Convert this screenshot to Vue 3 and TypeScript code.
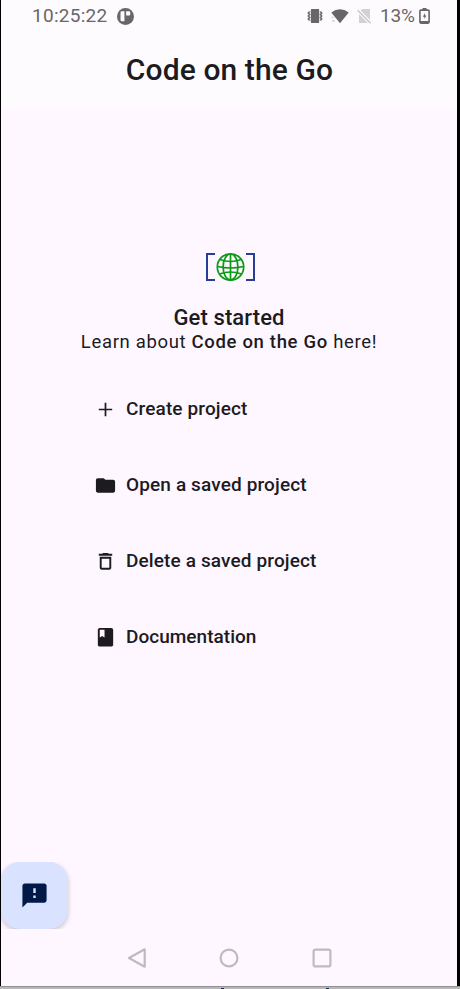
<script setup lang="ts">
type ActionIcon = 'add' | 'folder' | 'delete' | 'book'

interface Action {
  icon: ActionIcon
  label: string
}

const actions: Action[] = [
  { icon: 'add', label: 'Create project' },
  { icon: 'folder', label: 'Open a saved project' },
  { icon: 'delete', label: 'Delete a saved project' },
  { icon: 'book', label: 'Documentation' },
]

const iconPaths: Record<ActionIcon, string> = {
  add: 'M19 12.9h-6.1V19h-1.8v-6.1H5v-1.8h6.1V5h1.8v6.1H19z',
  folder: 'M10 4.500H4c-1.100 0-2 .9-2 2v11c0 1.100.9 2 2 2h16c1.100 0 2-.9 2-2V8c0-1.100-.9-2-2-2h-8z',
  delete: 'M6 18.500c0 1.100.9 2 2 2h8c1.100 0 2-.9 2-2V7H6zM8 9h8v9.500H8zM15.500 4l-1-1h-5l-1 1H5v2h14V4z',
  book: 'M18 2H6c-1.100 0-2 .9-2 2v15.500c0 1.100.9 2 2 2h12c1.100 0 2-.9 2-2V4c0-1.100-.9-2-2-2zM6 4h5v8l-2.500-1.500L6 12z',
}
</script>

<template>
  <div class="device">
    <div class="screen">
      <header class="top">
        <div class="status">
          <span class="clock">10:25:22</span>
          <svg class="badge" viewBox="0 0 16 16" width="17" height="17">
            <circle cx="8" cy="8" r="8" fill="#68666a" />
            <path d="M3.300 4.200Q3.300 3 4.500 3H7v9.500H4.500Q3.300 12.500 3.300 11.300zM8.600 3h2.700q1.200 0 1.200 1.200v1.600q0 1.200-1.200 1.200H8.600z" fill="#fefbff" />
          </svg>
          <span class="grow"></span>
          <svg class="vibrate" viewBox="0 0 16 16" width="16" height="16">
            <rect x="3.800" y="1" width="8.400" height="14" rx="1" fill="#68666a" />
            <path d="M2.600 3.500 1.300 5l1.300 1.500L1.300 8l1.300 1.500L1.300 11l1.300 1.500M13.400 3.500 14.700 5l-1.300 1.500L14.700 8l-1.300 1.500 1.300 1.500-1.300 1.500" fill="none" stroke="#68666a" stroke-width="1.500" />
          </svg>
          <svg class="wifi" viewBox="0 0 18 16" width="18" height="16">
            <path d="M.3 4.600Q9-2.200 17.700 4.600L9 15.200z" fill="#68666a" />
            <path d="M.5 9.500h2M1 13h3" stroke="#d5d2d7" stroke-width="1.300" />
          </svg>
          <svg class="signal" viewBox="0 0 15 16" width="15" height="16">
            <path d="M5 1h8v11L3.800 2.800zM2 15V6l9 9z" fill="#d4d1d5" />
            <path d="M.6 2.200l13 13" stroke="#c8c5c9" stroke-width="1.400" />
          </svg>
          <span class="percent">13%</span>
          <svg class="battery" viewBox="0 0 11 16" width="11" height="16">
            <path d="M3.500 0h4v2h-4z" fill="#68666a" />
            <rect x=".9" y="2.100" width="9.200" height="13" rx="1" fill="none" stroke="#68666a" stroke-width="1.600" />
            <path d="M6 5 3.800 8.700h1.500v2.400l2.200-3.500H6zM1 13h9v2H1z" fill="#68666a" />
          </svg>
        </div>
        <h1 class="title"><span>Code on the Go</span></h1>
      </header>

      <main class="content">
        <svg class="logo" viewBox="0 0 50 30" width="50" height="30">
          <path d="M10 2H2v26h8M41 2h8v26h-8" fill="none" stroke="#263e97" stroke-width="2" />
          <g fill="none" stroke="#0a9b13" stroke-width="1.700">
            <circle cx="25.500" cy="15" r="13.200" />
            <path d="M25.500 2v26" />
            <ellipse cx="25.500" cy="15" rx="7.400" ry="13" />
            <path d="M15 7.500q10.500 4 21 0M12.500 14.500q13 3 26 0M14.500 22q11-4 22 0" />
          </g>
        </svg>
        <h2 class="heading"><span>Get started</span></h2>
        <p class="intro"><span>Learn about <b>Code on the Go</b> here!</span></p>
        <nav class="actions">
          <button v-for="action in actions" :key="action.icon" class="action" type="button">
            <svg viewBox="0 0 24 24" width="23" height="23">
              <path :d="iconPaths[action.icon]" fill="#1c1b1f" fill-rule="evenodd" />
            </svg>
            <span :class="action.icon">{{ action.label }}</span>
          </button>
        </nav>
      </main>

      <div class="dock">
        <button class="feedback" type="button" aria-label="Feedback">
          <svg viewBox="0 0 24 24" width="29" height="29">
            <path d="M20 2H4c-1.100 0-1.990.9-1.990 2L2 22l4-4h14c1.100 0 2-.9 2-2V4c0-1.100-.9-2-2-2zm-7 12h-2v-2h2zm0-4h-2V6h2z" fill="#001946" />
          </svg>
        </button>
      </div>

      <footer class="navbar">
        <svg viewBox="0 0 20 20" width="20" height="20">
          <path d="M17.700 1.300v17.400L2 10z" />
        </svg>
        <svg viewBox="0 0 20 20" width="20" height="20">
          <circle cx="10" cy="10" r="8.400" />
        </svg>
        <svg viewBox="0 0 20 20" width="20" height="20">
          <rect x="1.600" y="1.600" width="16.800" height="16.800" rx="2" />
        </svg>
      </footer>
    </div>
    <div class="edge"><i></i><i></i></div>
  </div>
</template>

<style>
body {
  background: #000;
}
</style>

<style scoped>
.device {
  width: 460px;
  height: 989px;
  overflow: hidden;
  background: #000;
  font-family: Roboto, "Liberation Sans", sans-serif;
  color: #1c1b1f;
}
.screen {
  display: flex;
  flex-direction: column;
  width: 456px;
  height: 986px;
  margin-left: 1px;
  background: #fef7ff;
}
.top {
  height: 108px;
  background: #fefbff;
}
.status {
  display: flex;
  align-items: center;
  height: 32px;
  padding: 0 27px 0 31px;
  color: #68666a;
  font-size: 19px;
}
.clock,
.percent {
  padding-bottom: 1px;
}
.clock {
  width: 76px;
  white-space: nowrap;
  letter-spacing: 0.28px;
}
.badge {
  margin-left: 9px;
}
.grow {
  flex: 1;
}
.wifi {
  margin-left: 8px;
}
.signal {
  margin-left: 8px;
}
.percent {
  width: 35px;
  margin: 0 4px 0 8px;
  letter-spacing: -0.2px;
}
.title {
  display: flex;
  justify-content: center;
  margin: 19px 0 0;
  padding-left: 1px;
  font-size: 30px;
  line-height: 38px;
  font-weight: 500;
  letter-spacing: 0.1px;
  white-space: nowrap;
}
.content {
  display: flex;
  flex-direction: column;
  align-items: center;
  height: 754px;
  box-sizing: border-box;
  padding-top: 144px;
}
.logo {
  margin-left: 2px;
}
.heading {
  margin: 24px 0 0;
  font-size: 22px;
  line-height: 24px;
  font-weight: 500;
  letter-spacing: 0.12px;
}
.intro {
  margin: 0;
  font-size: 18.5px;
  line-height: 24px;
  letter-spacing: 0.67px;
  white-space: nowrap;
}
.intro b {
  font-weight: 500;
  letter-spacing: 0.67px;
}
.actions {
  display: flex;
  flex-direction: column;
  align-self: flex-start;
  gap: 36px;
  margin: 35px 0 0 93px;
}
.action {
  display: flex;
  align-items: center;
  gap: 9px;
  height: 40px;
  padding: 0;
  border: 0;
  background: none;
  color: inherit;
  font: 500 19px/24px Roboto, "Liberation Sans", sans-serif;
  letter-spacing: 0.13px;
  white-space: nowrap;
}
.action .book {
  letter-spacing: 0.03px;
}
.dock {
  height: 67px;
  overflow: hidden;
}
.feedback {
  display: grid;
  place-items: center;
  width: 67px;
  height: 67px;
  padding: 0;
  border: 0;
  border-radius: 19px;
  background: #d9e2ff;
  box-shadow: 0 2px 5px rgba(0, 0, 0, 0.22);
}
.navbar {
  display: flex;
  align-items: center;
  gap: 72.5px;
  height: 57px;
  padding-left: 125.5px;
}
.navbar svg {
  fill: none;
  stroke: #bfbac1;
  stroke-width: 2.2;
  stroke-linejoin: round;
}
.edge {
  display: flex;
  gap: 102px;
  height: 2px;
  padding-left: 221px;
  border-top: 1px solid #929292;
  background: #b8b8b8;
}
.edge i {
  width: 3px;
  height: 1px;
  margin-top: 1px;
  background: #18274a;
}
</style>
